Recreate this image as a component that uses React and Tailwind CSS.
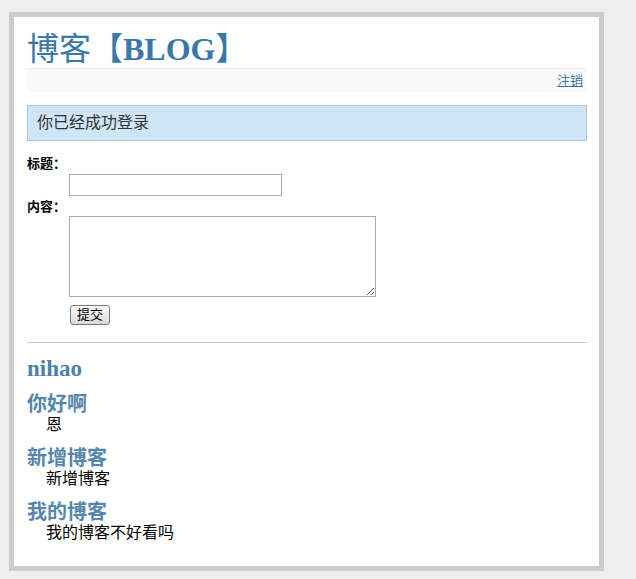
const POSTS = [
  { title: '你好啊', body: '恩' },
  { title: '新增博客', body: '新增博客' },
  { title: '我的博客', body: '我的博客不好看吗' },
];

const cjk = { fontFamily: '"Liberation Sans", "Noto Sans CJK SC", sans-serif' };
const serif = { fontFamily: '"Liberation Serif", "Noto Sans CJK SC", serif' };

export default function App() {
  return (
    <div className="min-h-[579px] bg-[#eeeeee] pt-3 pl-[9px]" style={cjk}>
      <div className="w-[595px] h-[559px] border-[5px] border-[#cccccc] bg-white pl-[13px] pr-[12px] pt-[14px]">
        {/* Header */}
        <h1 className="text-[32px] leading-[36px] text-[#3a78a8] whitespace-nowrap" style={serif}>
          博客【<span className="font-bold">BLOG</span>】
        </h1>
        <div className="mt-px h-6 border-t border-[#eeeeee] bg-[#f9f9f9] flex items-center justify-end pr-1">
          <a href="#" className="text-[13px] leading-4 text-[#3a78a8] underline">注销</a>
        </div>

        {/* Flash message */}
        <div className="mt-[13px] h-9 border border-[#a9c9dd] bg-[#cfe5f5] pl-[9px] flex items-center text-[16px] text-[#333333]">
          你已经成功登录
        </div>

        {/* Form */}
        <form className="mt-[14px]">
          <label className="block text-[13px] leading-[18px] font-bold text-black">标题：</label>
          <input type="text" className="block mt-px ml-[42px] w-[213px] h-[22px] border border-[#aaaaaa] bg-white" />
          <label className="block mt-[2px] text-[13px] leading-[18px] font-bold text-black">内容：</label>
          <textarea className="block ml-[42px] w-[307px] h-[81px] border border-[#aaaaaa] bg-white" />
          <button
            type="button"
            className="block mt-2 ml-[43px] w-10 h-5 border border-[#777777] rounded-[3px] bg-gradient-to-b from-white to-[#d8d8d8] text-[13px] leading-[18px] text-black"
          >
            提交
          </button>
        </form>

        <div className="mt-[17px] border-t border-[#cccccc]" />

        {/* Posts */}
        <div className="mt-[13px] text-[23px] leading-[26px] font-bold text-[#4a80a8]" style={serif}>nihao</div>
        <div className="mt-[12px] flex flex-col gap-[14px]">
          {POSTS.map((p) => (
            <div key={p.title}>
              <h3 className="text-[20px] leading-[21px] font-bold text-[#5586ac]" style={serif}>{p.title}</h3>
              <p className="ml-[19px] text-[16px] leading-[19px] text-black">{p.body}</p>
            </div>
          ))}
        </div>
      </div>
    </div>
  );
}
